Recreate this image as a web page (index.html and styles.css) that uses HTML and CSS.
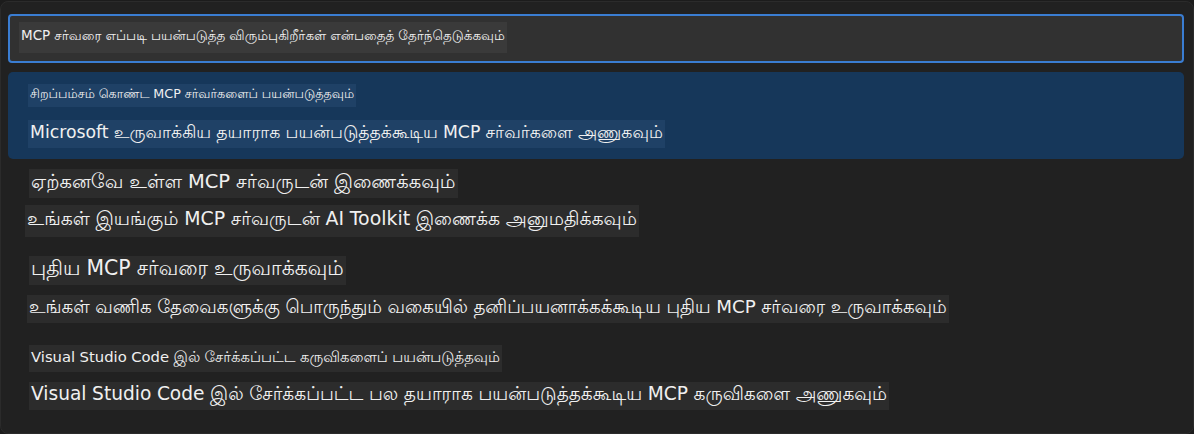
FILE: index.html
```html
<!DOCTYPE html>
<html lang="ta">
<head>
<meta charset="utf-8">
<link rel="stylesheet" href="styles.css">
</head>
<body>
<div class="panel">
  <div class="input"><span class="hl">MCP சர்வரை எப்படி பயன்படுத்த விரும்புகிறீர்கள் என்பதைத் தேர்ந்தெடுக்கவும்</span></div>
  <div class="list">
    <div class="item selected">
      <div class="line l1a"><span class="hl">சிறப்பம்சம் கொண்ட MCP சர்வர்களைப் பயன்படுத்தவும்</span></div>
      <div class="line l1b"><span class="hl">Microsoft உருவாக்கிய தயாராக பயன்படுத்தக்கூடிய MCP சர்வர்களை அணுகவும்</span></div>
    </div>
    <div class="item">
      <div class="line l2a"><span class="hl">ஏற்கனவே உள்ள MCP சர்வருடன் இணைக்கவும்</span></div>
      <div class="line l2b"><span class="hl">உங்கள் இயங்கும் MCP சர்வருடன் AI Toolkit இணைக்க அனுமதிக்கவும்</span></div>
    </div>
    <div class="item">
      <div class="line l3a"><span class="hl">புதிய MCP சர்வரை உருவாக்கவும்</span></div>
      <div class="line l3b"><span class="hl">உங்கள் வணிக தேவைகளுக்கு பொருந்தும் வகையில் தனிப்பயனாக்கக்கூடிய புதிய MCP சர்வரை உருவாக்கவும்</span></div>
    </div>
    <div class="item">
      <div class="line l4a"><span class="hl">Visual Studio Code இல் சேர்க்கப்பட்ட கருவிகளைப் பயன்படுத்தவும்</span></div>
      <div class="line l4b"><span class="hl">Visual Studio Code இல் சேர்க்கப்பட்ட பல தயாராக பயன்படுத்தக்கூடிய MCP கருவிகளை அணுகவும்</span></div>
    </div>
  </div>
</div>
</body>
</html>
```

FILE: styles.css
```css
html, body {
  margin: 0;
  padding: 0;
  background: #1c1c1c;
}
body {
  font-family: "Lohit Tamil", "DejaVu Sans", sans-serif;
  color: #f0f0f0;
}
.panel {
  box-sizing: border-box;
  width: 1194px;
  height: 433px;
  margin-top: 1px;
  background: #212121;
  border: 1px solid #2b2b2b;
  border-radius: 8px;
  padding: 12px 9px 0 7px;
}
.input {
  box-sizing: border-box;
  height: 49px;
  border: 2px solid #3a7dd2;
  border-radius: 4px;
  background: #313131;
  padding: 6px 0 0 9px;
}
.hl {
  display: inline-block;
  vertical-align: top;
  background: #2c2c2c;
  padding: 0 2px;
  white-space: nowrap;
}
.input .hl {
  background: #3a3a3a;
  font-size: 13.5px;
  line-height: 31px;
}
.list {
  margin-top: 9px;
}
.item {
  border-radius: 5px;
}
.line {
  display: block;
}
.selected {
  box-sizing: border-box;
  height: 87px;
  padding: 12px 0 0 20px;
  background: #16375a;
}
.selected .hl {
  background: #1f4166;
}
.l1a .hl { font-size: 12.7px; line-height: 23px; }
.l1b { margin-top: 13px; }
.l1b .hl { font-size: 17.3px; line-height: 28px; }
.l2a { margin-top: 10px; padding-left: 21px; }
.l2a .hl { font-size: 19.5px; line-height: 29px; }
.l2b { margin-top: 7px; padding-left: 17px; }
.l2b .hl { font-size: 18.9px; line-height: 32px; }
.l3a { margin-top: 19px; padding-left: 21px; }
.l3a .hl { font-size: 20.4px; line-height: 29px; }
.l3b { margin-top: 10px; padding-left: 19px; }
.l3b .hl { font-size: 18.3px; line-height: 28px; }
.l4a { margin-top: 22px; padding-left: 21px; }
.l4a .hl { font-size: 14.8px; line-height: 27px; }
.l4b { margin-top: 10px; padding-left: 21px; }
.l4b .hl { font-size: 18.6px; line-height: 28px; }
```
